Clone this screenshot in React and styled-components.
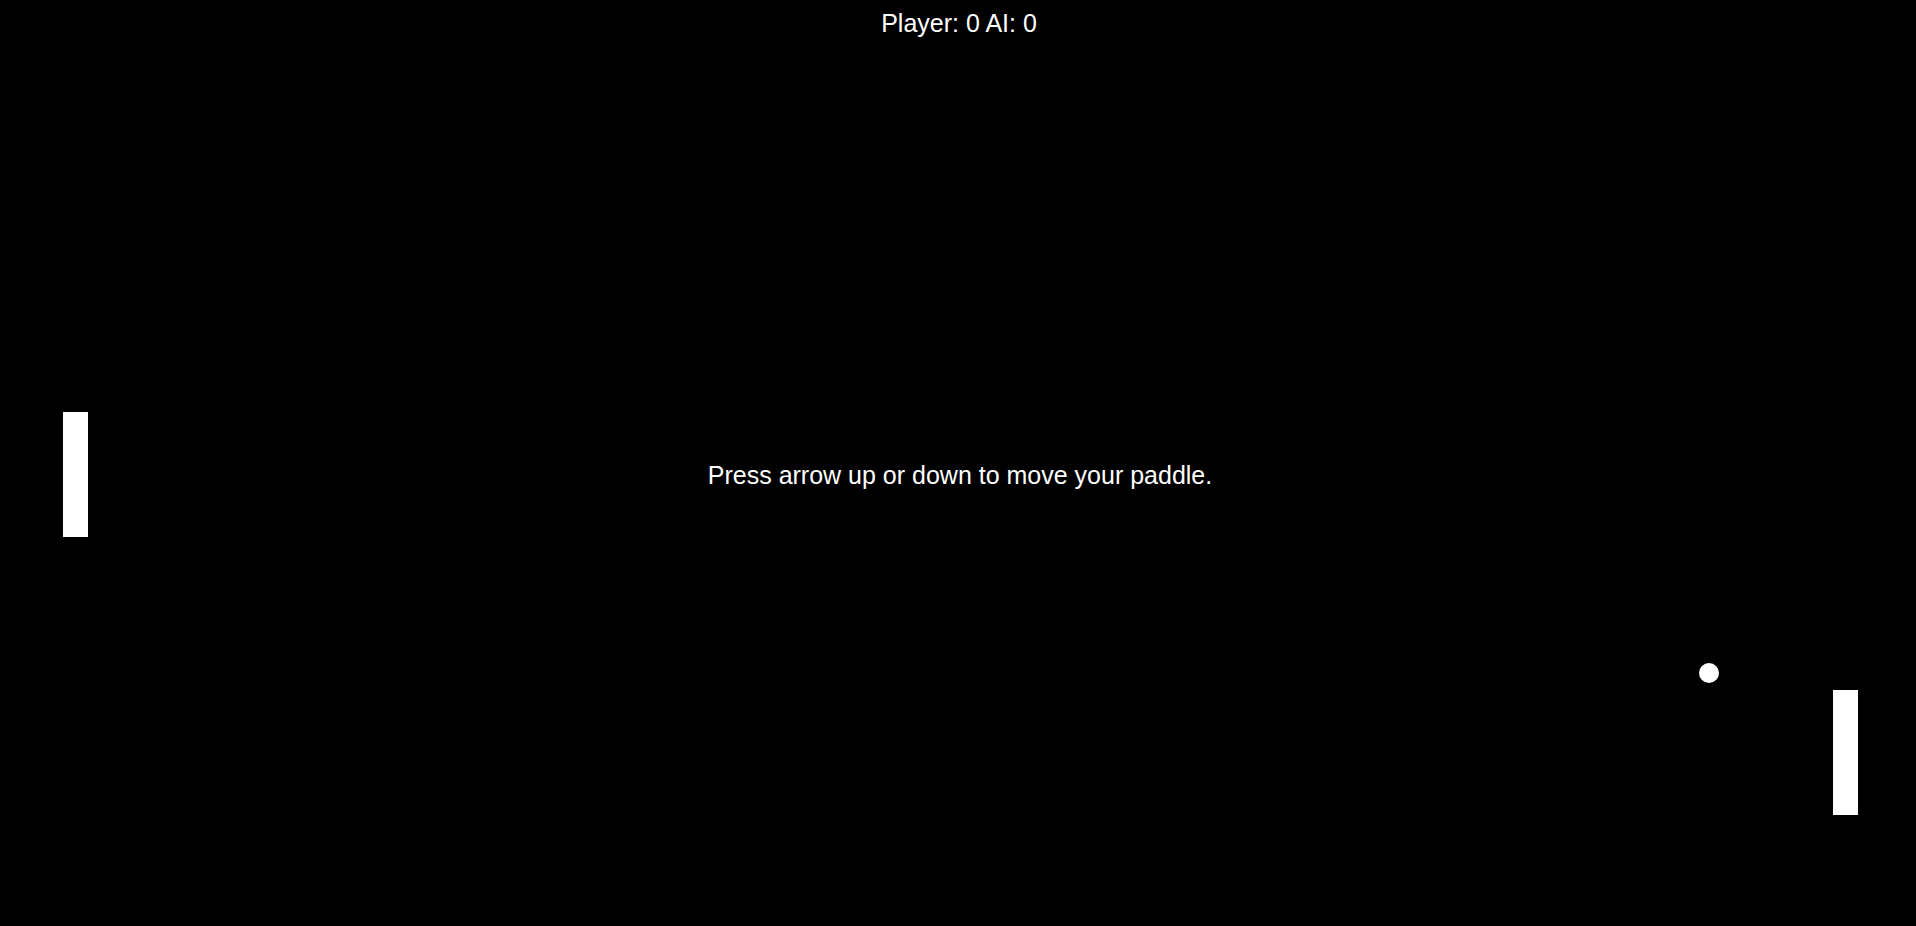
import React from 'react';
import styled, { createGlobalStyle } from 'styled-components';

const GlobalStyle = createGlobalStyle`
  html, body {
    margin: 0;
    padding: 0;
    background: #000;
    overflow: hidden;
  }
  body {
    font-family: "Liberation Sans", Arial, sans-serif;
  }
`;

const Court = styled.div`
  position: relative;
  width: 100vw;
  height: 100vh;
  background: #000;
  color: #fff;
  display: flex;
  flex-direction: column;
  align-items: center;
`;

const Score = styled.div`
  margin-top: 9px;
  font-size: 25px;
  line-height: 28px;
  padding-left: 2px;
`;

const Message = styled.div`
  margin-top: 424px;
  font-size: 25px;
  line-height: 28px;
  padding-left: 4px;
`;

const Paddle = styled.div`
  position: absolute;
  left: ${(p) => p.x}px;
  top: ${(p) => p.y}px;
  width: 25px;
  height: 125px;
  background: #fff;
`;

const Ball = styled.div`
  position: absolute;
  left: ${(p) => p.x - 10}px;
  top: ${(p) => p.y - 10}px;
  width: 20px;
  height: 20px;
  border-radius: 50%;
  background: #fff;
`;

const App = () => {
  return (
    <>
      <GlobalStyle />
      <Court>
        <Score>Player: 0 AI: 0</Score>
        <Message>Press arrow up or down to move your paddle.</Message>
        <Paddle x={63} y={412} />
        <Paddle x={1833} y={690} />
        <Ball x={1709} y={673} />
      </Court>
    </>
  );
};

export default App;
